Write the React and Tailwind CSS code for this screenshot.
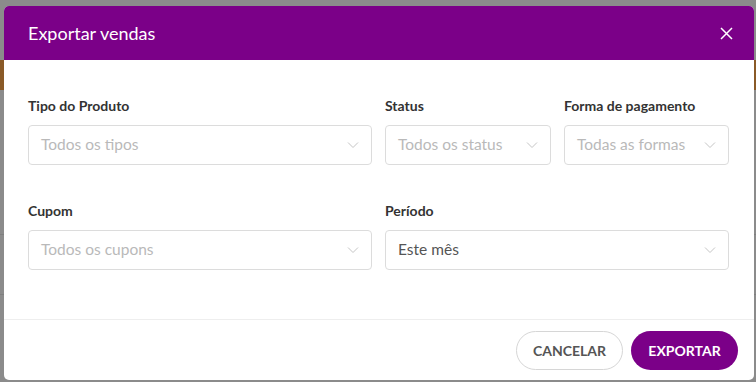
import React from "react";

const Chevron = () => (
  <svg width="12" height="8" viewBox="0 0 12 8" fill="none" className="shrink-0">
    <path d="M1 1.5l5 5 5-5" stroke="#c4c4c4" strokeWidth="1" />
  </svg>
);

const Select = ({ value, placeholder }) => (
  <div className="h-[40px] rounded-[4px] border border-[#dcdcdc] bg-white flex items-center justify-between pl-[12px] pr-[12px]">
    <span className={value ? "text-[15.5px] text-[#555]" : "text-[15.5px] text-[#b9b9b9]"}>
      {value || placeholder}
    </span>
    <Chevron />
  </div>
);

const Field = ({ label, ...rest }) => (
  <div className="flex flex-col">
    <label className="text-[14px] font-bold text-[#333] leading-[17px] mb-[11px]">{label}</label>
    <Select {...rest} />
  </div>
);

export default function App() {
  return (
    <div
      className="relative w-[756px] h-[382px] overflow-hidden bg-[#8b8b8b]"
      style={{ fontFamily: "Lato, 'Noto Sans', sans-serif" }}
    >
      {/* page behind the overlay */}
      <div className="h-[60px]" />
      <div className="h-[30px] bg-[#8a5a27]" />
      <div className="h-[145px] border-b border-[#7f7f7f]" />
      <div className="h-[60px] border-b border-[#7f7f7f]" />

      {/* modal */}
      <div className="absolute left-[4px] top-[6px] w-[750px] h-[374px] bg-white rounded-[5px] flex flex-col overflow-hidden">
        <div className="h-[54px] bg-[#7b0088] flex items-center justify-between pl-[24px] pr-[21px]">
          <h2 className="text-white text-[18px] leading-none">Exportar vendas</h2>
          <svg width="13" height="13" viewBox="0 0 13 13" fill="none">
            <path d="M1 1l11 11M12 1L1 12" stroke="white" strokeWidth="1.5" />
          </svg>
        </div>

        <div className="flex-1 px-[24px] pt-[37px] pr-[25px]">
          <div className="grid grid-cols-[344px_166px_1fr] gap-x-[13px]">
            <Field label="Tipo do Produto" placeholder="Todos os tipos" />
            <Field label="Status" placeholder="Todos os status" />
            <Field label="Forma de pagamento" placeholder="Todas as formas" />
          </div>
          <div className="grid grid-cols-[344px_1fr] gap-x-[13px] mt-[37px]">
            <Field label="Cupom" placeholder="Todos os cupons" />
            <Field label="Período" value="Este mês" />
          </div>
        </div>

        <div className="h-[61px] border-t border-[#eeeeee] flex items-center justify-end gap-[8px] pr-[16px]">
          <button className="h-[39px] w-[107px] rounded-full border border-[#d6d6d6] bg-white text-[#555] text-[14px] font-bold">
            CANCELAR
          </button>
          <button className="h-[39px] w-[107px] rounded-full bg-[#7b0088] text-white text-[14px] font-bold">
            EXPORTAR
          </button>
        </div>
      </div>
    </div>
  );
}
